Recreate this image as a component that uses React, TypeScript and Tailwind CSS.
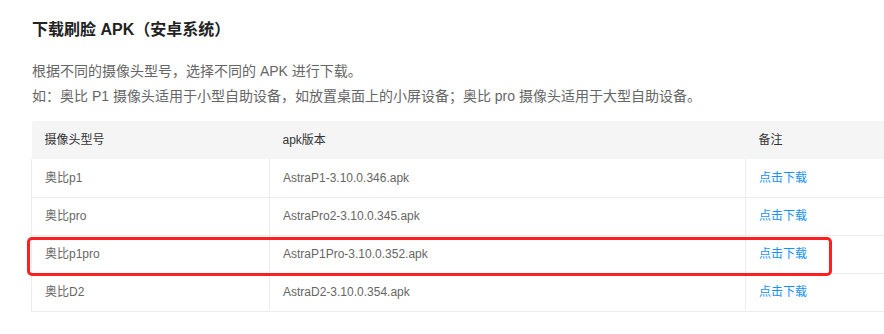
const rows = [
  { model: "奥比p1", apk: "AstraP1-3.10.0.346.apk" },
  { model: "奥比pro", apk: "AstraPro2-3.10.0.345.apk" },
  { model: "奥比p1pro", apk: "AstraP1Pro-3.10.0.352.apk" },
  { model: "奥比D2", apk: "AstraD2-3.10.0.354.apk" },
];

export default function App() {
  return (
    <div
      className="relative h-[334px] w-[884px] overflow-hidden bg-white pl-[32px] pt-[18px]"
      style={{ fontFamily: '"Liberation Sans", "Noto Sans CJK SC", sans-serif' }}
    >
      <h2 className="text-[16px] font-bold leading-[24px] text-[#222]">下载刷脸 APK（安卓系统）</h2>

      <div className="mt-[17px] text-[14px] leading-[25px] text-[#666]">
        <p>根据不同的摄像头型号，选择不同的 APK 进行下载。</p>
        <p>如：奥比 P1 摄像头适用于小型自助设备，如放置桌面上的小屏设备；奥比 pro 摄像头适用于大型自助设备。</p>
      </div>

      <div className="relative -ml-px mt-[12px] w-[900px]">
        <table className="w-full border-collapse text-[12px]">
          <thead>
            <tr className="h-[38px] bg-[#f5f5f5] text-left text-[#333]">
              <th className="w-[238px] rounded-tl-[3px] pl-[13px] font-normal">摄像头型号</th>
              <th className="w-[476px] pl-[13px] font-normal">apk版本</th>
              <th className="pl-[13px] font-normal">备注</th>
            </tr>
          </thead>
          <tbody className="text-[#666]">
            {rows.map((r) => (
              <tr key={r.apk} className="h-[38px] border-b border-[#ededed]">
                <td className="border-x border-[#ededed] pl-[13px]">{r.model}</td>
                <td className="border-r border-[#ededed] pl-[13px]">{r.apk}</td>
                <td className="pl-[13px]">
                  <a className="text-[#1890ff]" href="#">点击下载</a>
                </td>
              </tr>
            ))}
          </tbody>
        </table>

        {/* red highlight drawn over the p1pro row */}
        <div className="pointer-events-none absolute left-[-4px] top-[116px] h-[39px] w-[805px] rounded-[5px] border-[3px] border-[#ff1f1f]" />
      </div>
    </div>
  );
}
